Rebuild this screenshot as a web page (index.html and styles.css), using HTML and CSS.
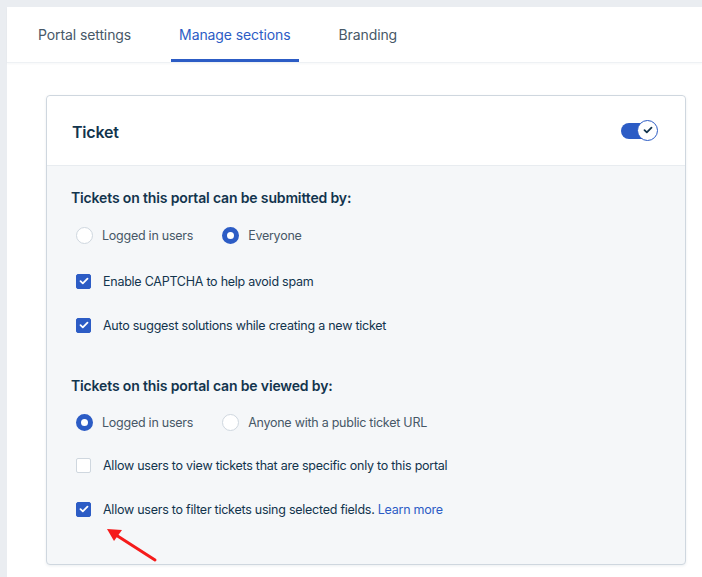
FILE: index.html
```html
<!DOCTYPE html>
<html lang="en">
<head>
<meta charset="utf-8">
<title>Manage sections</title>
<link rel="stylesheet" href="styles.css">
</head>
<body>
<div class="panel">
  <nav class="tabs">
    <a class="tab">Portal settings</a>
    <a class="tab active">Manage sections</a>
    <a class="tab">Branding</a>
  </nav>
  <div class="content">
    <section class="card">
      <header class="card-head">
        <h2 class="card-title">Ticket</h2>
        <span class="toggle">
          <span class="toggle-track"></span>
          <span class="toggle-knob">
            <svg width="10" height="8" viewBox="0 0 10 8"><path d="M1.5 4.2 L3.8 6.3 L8.5 1.6" fill="none" stroke="#12344d" stroke-width="1.8" stroke-linecap="round" stroke-linejoin="round"/></svg>
          </span>
        </span>
      </header>
      <div class="card-body">
        <h3 class="group-title">Tickets on this portal can be submitted by:</h3>
        <div class="radio-row">
          <label class="radio"><span class="radio-dot"></span><span class="opt">Logged in users</span></label>
          <label class="radio"><span class="radio-dot on"></span><span class="opt">Everyone</span></label>
        </div>
        <label class="check check-first"><span class="box on"><svg width="10" height="8" viewBox="0 0 10 8"><path d="M1.5 4.2 L3.8 6.3 L8.5 1.6" fill="none" stroke="#fff" stroke-width="1.8" stroke-linecap="round" stroke-linejoin="round"/></svg></span><span class="chk-label">Enable CAPTCHA to help avoid spam</span></label>
        <label class="check"><span class="box on"><svg width="10" height="8" viewBox="0 0 10 8"><path d="M1.5 4.2 L3.8 6.3 L8.5 1.6" fill="none" stroke="#fff" stroke-width="1.8" stroke-linecap="round" stroke-linejoin="round"/></svg></span><span class="chk-label">Auto suggest solutions while creating a new ticket</span></label>

        <h3 class="group-title second">Tickets on this portal can be viewed by:</h3>
        <div class="radio-row tight">
          <label class="radio"><span class="radio-dot on"></span><span class="opt">Logged in users</span></label>
          <label class="radio"><span class="radio-dot"></span><span class="opt">Anyone with a public ticket URL</span></label>
        </div>
        <label class="check check-first tight"><span class="box"></span><span class="chk-label">Allow users to view tickets that are specific only to this portal</span></label>
        <label class="check"><span class="box on"><svg width="10" height="8" viewBox="0 0 10 8"><path d="M1.5 4.2 L3.8 6.3 L8.5 1.6" fill="none" stroke="#fff" stroke-width="1.8" stroke-linecap="round" stroke-linejoin="round"/></svg></span><span class="chk-label">Allow users to filter tickets using selected fields. <a class="link">Learn more</a></span></label>

        <svg class="arrow" width="60" height="40" viewBox="0 0 60 40">
          <line x1="53" y1="34" x2="14" y2="9" stroke="#f51b1b" stroke-width="3" stroke-linecap="round"/>
          <polygon points="5,3 20,4 12,15" fill="#f51b1b"/>
        </svg>
      </div>
    </section>
  </div>
</div>
</body>
</html>
```
FILE: styles.css
```css
* { box-sizing: border-box; }
html, body { margin: 0; padding: 0; }
body {
  background: #eaedf1;
  font-family: Inter, "Noto Sans", "Liberation Sans", sans-serif;
  color: #12344d;
  overflow: hidden;
  height: 577px;
}
.panel {
  margin: 7px 0 0 7px;
  background: #fff;
  height: 570px;
}
.tabs {
  display: flex;
  gap: 32px;
  padding-left: 23px;
  height: 56px;
  border-bottom: 1px solid #eef1f4;
  box-shadow: 0 1px 2px rgba(18, 52, 77, 0.04);
}
.tab {
  display: flex;
  align-items: center;
  padding: 0 8px 1px;
  font-size: 14px;
  color: #475867;
  letter-spacing: -0.1px;
  border-bottom: 3px solid transparent;
  padding-top: 3px;
}
.tab.active {
  color: #2c5cc5;
  border-bottom-color: #2c5cc5;
  border-radius: 2px 2px 0 0;
}
.content {
  padding: 32px 16px 0 39px;
}
.card {
  border: 1px solid #cfd7df;
  border-radius: 4px;
  background: #f5f7f9;
  box-shadow: 0 1px 3px rgba(18, 52, 77, 0.08);
  width: 640px;
}
.card-head {
  display: flex;
  align-items: center;
  justify-content: space-between;
  height: 70px;
  padding: 0 27px 0 25px;
  background: #fff;
  border-bottom: 1px solid #e8ecf0;
  border-radius: 4px 4px 0 0;
}
.card-title {
  margin: 2px 0 0;
  font-size: 16px;
  font-weight: 600;
  color: #12344d;
  letter-spacing: -0.2px;
}
.toggle {
  position: relative;
  display: flex;
  align-items: center;
  width: 37px;
  height: 22px;
}
.toggle-track {
  width: 29px;
  height: 16px;
  border-radius: 8px;
  background: #2c5cc5;
}
.toggle-knob {
  position: absolute;
  right: 0;
  top: 0;
  width: 21px;
  height: 21px;
  border-radius: 50%;
  background: #fff;
  border: 1.5px solid #2c5cc5;
  display: flex;
  align-items: center;
  justify-content: center;
}
.card-body {
  position: relative;
  padding: 22px 24px 45px 24px;
}
.group-title {
  margin: 0;
  font-size: 14px;
  font-weight: 600;
  line-height: 20px;
  color: #12344d;
  letter-spacing: -0.15px;
}
.group-title.second {
  margin-top: 41px;
}
.radio-row {
  display: flex;
  gap: 29px;
  margin-top: 17px;
  padding-left: 5px;
}
.radio-row.tight {
  margin-top: 16px;
}
.radio {
  display: flex;
  align-items: center;
  gap: 9px;
  height: 20px;
}
.radio-dot {
  width: 17px;
  height: 17px;
  border-radius: 50%;
  background: #fff;
  border: 1px solid #cfd7df;
}
.radio-dot.on {
  border: 5px solid #2c5cc5;
}
.opt {
  font-size: 12.5px;
  color: #475867;
  letter-spacing: -0.25px;
}
.check {
  display: flex;
  align-items: center;
  gap: 12px;
  height: 20px;
  padding-left: 5px;
  margin-top: 24px;
}
.check-first {
  margin-top: 26px;
}
.check-first.tight {
  margin-top: 23px;
}
.box {
  width: 15px;
  height: 15px;
  border-radius: 2px;
  background: #fff;
  border: 1px solid #cfd7df;
  display: flex;
  align-items: center;
  justify-content: center;
}
.box.on {
  background: #2c5cc5;
  border-color: #2c5cc5;
}
.chk-label {
  font-size: 12.5px;
  color: #12344d;
  letter-spacing: -0.25px;
}
.link {
  color: #2c5cc5;
}
.arrow {
  position: absolute;
  left: 55px;
  top: 360px;
}
```
